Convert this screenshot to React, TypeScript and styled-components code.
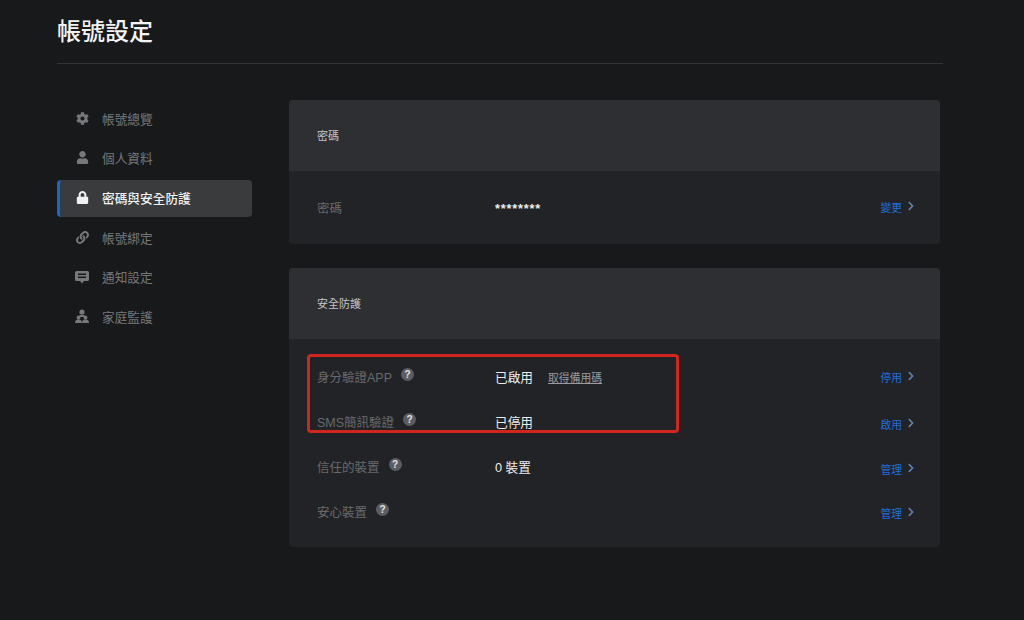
import React from 'react';
import styled, { createGlobalStyle } from 'styled-components';
import { FaCog, FaUser, FaLock, FaLink, FaChevronRight } from 'react-icons/fa';

const GlobalStyle = createGlobalStyle`
  html, body {
    margin: 0;
    background: #18191b;
    font-family: "Liberation Sans", "Noto Sans CJK TC", sans-serif;
  }
`;

const CommentIcon = () => (
  <svg width="14" height="14" viewBox="0 0 14 14" fill="currentColor">
    <path
      fillRule="evenodd"
      d="M1.500 1h11A1.500 1.500 0 0 1 14 2.500v7a1.500 1.500 0 0 1-1.500 1.500H9l-2 2.500L5 11H1.500A1.500 1.500 0 0 1 0 9.500v-7A1.500 1.500 0 0 1 1.500 1ZM3 3.500V5h8V3.500H3Zm0 3V8h8V6.500H3Z"
    />
  </svg>
);

const FamilyIcon = () => (
  <svg width="14" height="14" viewBox="0 0 14 14" fill="currentColor">
    <circle cx="7" cy="3" r="2.600" />
    <path d="M3.500 7.500C4 6.300 5.500 6 7 6s3 .3 3.500 1.500L9.800 8H4.200L3.500 7.500Z" />
    <circle cx="3.500" cy="8.400" r="1.900" />
    <circle cx="10.500" cy="8.400" r="1.900" />
    <path d="M0 14c0-2.500 1.400-3.700 3.500-3.700S7 11.500 7 14H0ZM7 14c0-2.500 1.400-3.700 3.500-3.700S14 11.500 14 14H7Z" />
  </svg>
);

const Page = styled.div`
  width: 1024px;
  height: 620px;
  box-sizing: border-box;
  padding: 0 81px 0 57px;
  overflow: hidden;
  background: #18191b;
`;

const Header = styled.header`
  height: 64px;
  box-sizing: border-box;
  padding: 14px 0 0 0;
  border-bottom: 1px solid #333438;
`;

const Title = styled.h1`
  margin: 0;
  color: #f4f4f4;
  font-size: 24px;
  line-height: 36px;
  font-weight: 500;
`;

const Columns = styled.div`
  display: grid;
  grid-template-columns: 195px 651px;
  column-gap: 37px;
  padding-top: 36px;
`;

const Nav = styled.nav`
  display: flex;
  flex-direction: column;
  margin-top: -0.5px;
`;

const NavItem = styled.a<{ $active?: boolean }>`
  display: flex;
  align-items: center;
  gap: 13px;
  height: 37.600px;
  margin: 1px 0;
  box-sizing: border-box;
  padding: 0 0 2px 15px;
  border-radius: 4px;
  border-left: 3px solid ${(p) => (p.$active ? '#1a66d2' : 'transparent')};
  background: ${(p) => (p.$active ? '#3a3b3d' : 'transparent')};
  color: ${(p) => (p.$active ? '#f1f1f1' : '#77787a')};
  font-size: 12.700px;
  font-weight: ${(p) => (p.$active ? 500 : 400)};
`;

const NavIcon = styled.span`
  display: flex;
  width: 14px;
  justify-content: center;
  font-size: 13px;
`;

const Main = styled.main`
  display: flex;
  flex-direction: column;
  gap: 24px;
`;

const Card = styled.section`
  position: relative;
  border-radius: 4px;
  overflow: hidden;
  background: #222326;
`;

const CardTitle = styled.div`
  height: 71px;
  box-sizing: border-box;
  display: flex;
  align-items: center;
  padding: 0 0 2px 28px;
  background: #2e2f33;
  color: #c4c4c5;
  font-size: 11px;
`;

const Rows = styled.div<{ $pad: string }>`
  padding: ${(p) => p.$pad};
`;

const Row = styled.div`
  display: grid;
  grid-template-columns: 178px 1fr auto;
  align-items: center;
  height: 45px;
`;

const Label = styled.div`
  display: flex;
  align-items: center;
  gap: 9px;
  color: #68696c;
  font-size: 12.500px;
`;

const Help = styled.span`
  display: inline-flex;
  align-items: center;
  justify-content: center;
  width: 13px;
  height: 13px;
  margin-top: -5px;
  border-radius: 50%;
  background: #5b5d63;
  color: #e4e4e6;
  font-size: 10px;
  font-weight: 700;
`;

const Value = styled.div`
  display: flex;
  align-items: center;
  gap: 15px;
  color: #ececec;
  font-size: 12.700px;
`;

const Masked = styled.span`
  padding-top: 2px;
  letter-spacing: 0.800px;
  font-weight: 700;
`;

const SubLink = styled.a`
  color: #9a9b9e;
  font-size: 10.800px;
  text-decoration: underline;
`;

const Action = styled.a<{ $drop?: number }>`
  display: flex;
  align-items: center;
  gap: 4px;
  padding-top: ${(p) => Math.max(p.$drop ?? 0, 0) * 2}px;
  padding-bottom: ${(p) => Math.max(-(p.$drop ?? 0), 0) * 2}px;
  color: #1f6fdc;
  font-size: 10.800px;

  svg {
    color: #5f82b4;
    font-size: 10px;
    margin-top: -2px;
  }
`;

const Highlight = styled.div`
  position: absolute;
  left: 18px;
  top: 86px;
  width: 372px;
  height: 79px;
  box-sizing: border-box;
  border: 3px solid #d0261d;
  border-radius: 4px;
  pointer-events: none;
`;

const navItems = [
  { icon: <FaCog />, label: '帳號總覽' },
  { icon: <FaUser />, label: '個人資料' },
  { icon: <FaLock />, label: '密碼與安全防護', active: true },
  { icon: <FaLink />, label: '帳號綁定' },
  { icon: <CommentIcon />, label: '通知設定' },
  { icon: <FamilyIcon />, label: '家庭監護' },
];

const securityRows = [
  { label: '身分驗證APP', value: '已啟用', link: '取得備用碼', action: '停用', drop: 0 },
  { label: 'SMS簡訊驗證', value: '已停用', action: '啟用', drop: 2 },
  { label: '信任的裝置', value: '0 裝置', action: '管理', drop: 2 },
  { label: '安心裝置', value: '', action: '管理', drop: 1 },
];

export default function App() {
  return (
    <Page>
      <GlobalStyle />
      <Header>
        <Title>帳號設定</Title>
      </Header>
      <Columns>
        <Nav>
          {navItems.map((item) => (
            <NavItem key={item.label} $active={item.active}>
              <NavIcon>{item.icon}</NavIcon>
              {item.label}
            </NavItem>
          ))}
        </Nav>
        <Main>
          <Card>
            <CardTitle>密碼</CardTitle>
            <Rows $pad="14px 24px 14px 28px">
              <Row>
                <Label>密碼</Label>
                <Value>
                  <Masked>********</Masked>
                </Value>
                <Action $drop={-1}>
                  變更 <FaChevronRight />
                </Action>
              </Row>
            </Rows>
          </Card>
          <Card>
            <CardTitle>安全防護</CardTitle>
            <Rows $pad="15px 24px 13px 28px">
              {securityRows.map((row) => (
                <Row key={row.label}>
                  <Label>
                    {row.label}
                    <Help>?</Help>
                  </Label>
                  <Value>
                    {row.value}
                    {row.link && <SubLink>{row.link}</SubLink>}
                  </Value>
                  <Action $drop={row.drop}>
                    {row.action} <FaChevronRight />
                  </Action>
                </Row>
              ))}
            </Rows>
            <Highlight />
          </Card>
        </Main>
      </Columns>
    </Page>
  );
}
